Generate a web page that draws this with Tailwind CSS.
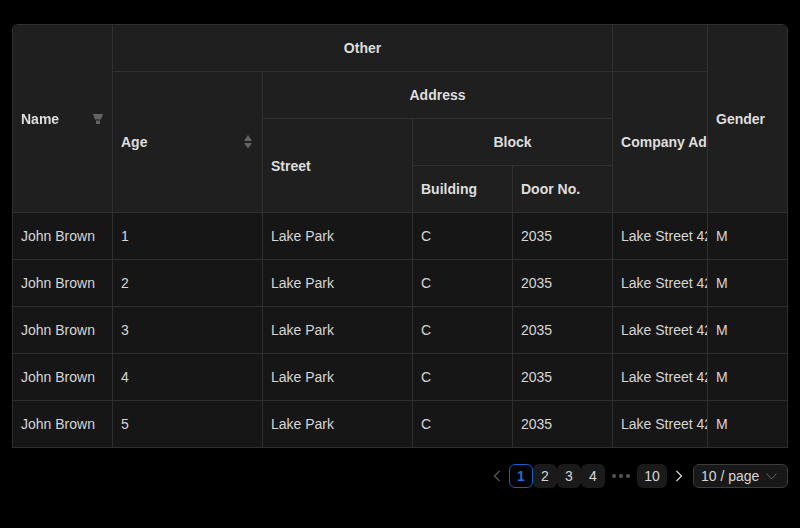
<!DOCTYPE html>
<html lang="en">
<head>
    <meta charset="UTF-8">
    <title>Data Table</title>
    <script src="https://cdn.jsdelivr.net/npm/@tailwindcss/browser@4"></script>
</head>
<body class="bg-black font-['Liberation_Sans',sans-serif] text-sm text-[#d6d6d6]">
    <div class="w-[800px] h-[528px] overflow-hidden px-3 pt-6">
        <div class="overflow-hidden rounded-t-[6px] border-t border-l border-[#303030]">
            <table class="table-fixed w-[775px] border-separate border-spacing-0">
                <colgroup>
                    <col class="w-[100px]"><col class="w-[150px]"><col class="w-[150px]"><col class="w-[100px]"><col class="w-[100px]"><col class="w-[95px]"><col class="w-[80px]">
                </colgroup>
                <thead class="bg-[#1f1f1f] text-[#dedede]">
                    <tr class="h-[47px]">
                        <th rowspan="4" class="p-2 text-left font-bold border-r border-b border-[#303030]">
                            <div class="flex items-center justify-between">
                                <span class="will-change-transform">Name</span>
                                <svg class="mr-px w-[10px] h-[10px]" viewBox="0 0 10 10" fill="#636363"><path d="M0 0H10L8 5.6H2Z"/><path d="M3 6.4H7V10H3Z"/></svg>
                            </div>
                        </th>
                        <th colspan="4" class="p-2 font-bold text-center border-r border-b border-[#303030]">Other</th>
                        <th class="p-2 border-r border-b border-[#303030]"></th>
                        <th rowspan="4" class="p-2 text-left font-bold border-r border-b border-[#303030]"><span class="will-change-transform">Gender</span></th>
                    </tr>
                    <tr class="h-[47px]">
                        <th rowspan="3" class="p-2 text-left font-bold border-r border-b border-[#303030]">
                            <div class="flex items-center justify-between">
                                <span>Age</span>
                                <svg class="mr-[2px] w-[8px] h-[14px]" viewBox="0 0 8 14" fill="#636363"><path d="M4 0L8 6H0Z"/><path d="M0 8H8L4 13.5Z"/></svg>
                            </div>
                        </th>
                        <th colspan="3" class="p-2 font-bold text-center border-r border-b border-[#303030]">Address</th>
                        <th rowspan="3" class="py-2 pl-2 pr-0 text-left font-bold whitespace-nowrap overflow-hidden border-r border-b border-[#303030]">Company Address</th>
                    </tr>
                    <tr class="h-[47px]">
                        <th rowspan="2" class="p-2 text-left font-bold border-r border-b border-[#303030]">Street</th>
                        <th colspan="2" class="p-2 font-bold text-center border-r border-b border-[#303030]">Block</th>
                    </tr>
                    <tr class="h-[47px]">
                        <th class="p-2 text-left font-bold border-r border-b border-[#303030]">Building</th>
                        <th class="p-2 text-left font-bold border-r border-b border-[#303030]">Door No.</th>
                    </tr>
                </thead>
                <tbody class="bg-[#161616]">
                    <tr class="h-[47px]">
                        <td class="p-2 border-r border-b border-[#303030]">John Brown</td>
                        <td class="p-2 border-r border-b border-[#303030]">1</td>
                        <td class="p-2 border-r border-b border-[#303030]">Lake Park</td>
                        <td class="p-2 border-r border-b border-[#303030]">C</td>
                        <td class="p-2 border-r border-b border-[#303030]">2035</td>
                        <td class="py-2 pl-2 pr-0 whitespace-nowrap overflow-hidden border-r border-b border-[#303030]">Lake Street 42</td>
                        <td class="p-2 border-r border-b border-[#303030]">M</td>
                    </tr>
                    <tr class="h-[47px]">
                        <td class="p-2 border-r border-b border-[#303030]">John Brown</td>
                        <td class="p-2 border-r border-b border-[#303030]">2</td>
                        <td class="p-2 border-r border-b border-[#303030]">Lake Park</td>
                        <td class="p-2 border-r border-b border-[#303030]">C</td>
                        <td class="p-2 border-r border-b border-[#303030]">2035</td>
                        <td class="py-2 pl-2 pr-0 whitespace-nowrap overflow-hidden border-r border-b border-[#303030]">Lake Street 42</td>
                        <td class="p-2 border-r border-b border-[#303030]">M</td>
                    </tr>
                    <tr class="h-[47px]">
                        <td class="p-2 border-r border-b border-[#303030]">John Brown</td>
                        <td class="p-2 border-r border-b border-[#303030]">3</td>
                        <td class="p-2 border-r border-b border-[#303030]">Lake Park</td>
                        <td class="p-2 border-r border-b border-[#303030]">C</td>
                        <td class="p-2 border-r border-b border-[#303030]">2035</td>
                        <td class="py-2 pl-2 pr-0 whitespace-nowrap overflow-hidden border-r border-b border-[#303030]">Lake Street 42</td>
                        <td class="p-2 border-r border-b border-[#303030]">M</td>
                    </tr>
                    <tr class="h-[47px]">
                        <td class="p-2 border-r border-b border-[#303030]">John Brown</td>
                        <td class="p-2 border-r border-b border-[#303030]">4</td>
                        <td class="p-2 border-r border-b border-[#303030]">Lake Park</td>
                        <td class="p-2 border-r border-b border-[#303030]">C</td>
                        <td class="p-2 border-r border-b border-[#303030]">2035</td>
                        <td class="py-2 pl-2 pr-0 whitespace-nowrap overflow-hidden border-r border-b border-[#303030]">Lake Street 42</td>
                        <td class="p-2 border-r border-b border-[#303030]">M</td>
                    </tr>
                    <tr class="h-[47px]">
                        <td class="p-2 border-r border-b border-[#303030]">John Brown</td>
                        <td class="p-2 border-r border-b border-[#303030]">5</td>
                        <td class="p-2 border-r border-b border-[#303030]">Lake Park</td>
                        <td class="p-2 border-r border-b border-[#303030]">C</td>
                        <td class="p-2 border-r border-b border-[#303030]">2035</td>
                        <td class="py-2 pl-2 pr-0 whitespace-nowrap overflow-hidden border-r border-b border-[#303030]">Lake Street 42</td>
                        <td class="p-2 border-r border-b border-[#303030]">M</td>
                    </tr>
                </tbody>
            </table>
        </div>

        <div class="mt-4 flex justify-end items-center h-6">
            <button class="w-6 h-6 flex items-center justify-center">
                <svg class="w-[8px] h-[12px]" viewBox="0 0 8 12" fill="none" stroke="#5a5a5a" stroke-width="1.2"><path d="M6.5 1L1.5 6L6.5 11"/></svg>
            </button>
            <button class="w-6 h-6 rounded-[6px] border border-[#1560c4] text-[#1a6fdc] font-bold flex items-center justify-center">1</button>
            <button class="w-6 h-6 rounded-[6px] bg-[#1a1a1a] flex items-center justify-center">2</button>
            <button class="w-6 h-6 rounded-[6px] bg-[#1a1a1a] flex items-center justify-center">3</button>
            <button class="w-6 h-6 rounded-[6px] bg-[#1a1a1a] flex items-center justify-center">4</button>
            <div class="w-6 h-6 mx-1 flex items-center justify-center gap-[3px]">
                <span class="w-1 h-1 rounded-full bg-[#555]"></span>
                <span class="w-1 h-1 rounded-full bg-[#555]"></span>
                <span class="w-1 h-1 rounded-full bg-[#555]"></span>
            </div>
            <button class="w-[30px] h-6 rounded-[6px] bg-[#1a1a1a] flex items-center justify-center">10</button>
            <button class="w-6 h-6 flex items-center justify-center">
                <svg class="w-[8px] h-[12px]" viewBox="0 0 8 12" fill="none" stroke="#dcdcdc" stroke-width="1.2"><path d="M1.5 1L6.5 6L1.5 11"/></svg>
            </button>
            <div class="ml-[2px] w-[95px] h-6 pl-[7px] pr-[10px] rounded-[6px] border border-[#3c3c3c] bg-[#181818] flex items-center justify-between">
                <span>10 / page</span>
                <svg class="w-[11px] h-[7px]" viewBox="0 0 11 7" fill="none" stroke="#636363" stroke-width="1"><path d="M0.5 0.5L5.5 6L10.5 0.5"/></svg>
            </div>
        </div>
    </div>
</body>
</html>
